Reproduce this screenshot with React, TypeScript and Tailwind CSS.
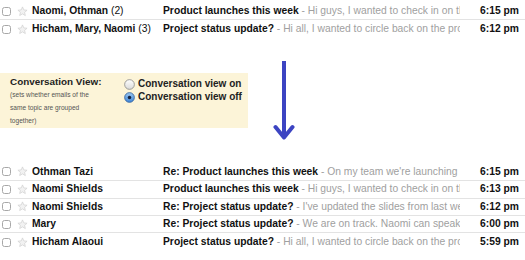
import type { ReactNode } from 'react';

type Mail = {
  from: ReactNode;
  subject: string;
  snippet: string;
  time: string;
};

const before: Mail[] = [
  {
    from: (
      <>
        Naomi, Othman <span className="font-normal">(2)</span>
      </>
    ),
    subject: 'Product launches this week',
    snippet: 'Hi guys, I wanted to check in on things',
    time: '6:15 pm',
  },
  {
    from: (
      <>
        Hicham, Mary, Naomi <span className="font-normal">(3)</span>
      </>
    ),
    subject: 'Project status update?',
    snippet: 'Hi all, I wanted to circle back on the project',
    time: '6:12 pm',
  },
];

const after: Mail[] = [
  { from: 'Othman Tazi', subject: 'Re: Product launches this week', snippet: "On my team we're launching a new", time: '6:15 pm' },
  { from: 'Naomi Shields', subject: 'Product launches this week', snippet: 'Hi guys, I wanted to check in on things', time: '6:13 pm' },
  { from: 'Naomi Shields', subject: 'Re: Project status update?', snippet: "I've updated the slides from last week", time: '6:12 pm' },
  { from: 'Mary', subject: 'Re: Project status update?', snippet: 'We are on track. Naomi can speak to it', time: '6:00 pm' },
  { from: 'Hicham Alaoui', subject: 'Project status update?', snippet: 'Hi all, I wanted to circle back on the project', time: '5:59 pm' },
];

function Checkbox() {
  return <span className="block w-[9px] h-[9px] rounded-[2.5px] border border-[#a8a8a8] bg-white" />;
}

function Star() {
  return (
    <svg width="11" height="11" viewBox="0 0 24 24" className="block">
      <path
        d="M12 2l2.9 6.6 7.1.6-5.4 4.7 1.6 7-6.2-3.7-6.2 3.7 1.6-7L2 9.2l7.1-.6z"
        fill="#f2f2f2"
        stroke="#d2d2d2"
        strokeWidth="1.6"
        strokeLinejoin="round"
      />
    </svg>
  );
}

function Row({ mail, last }: { mail: Mail; last?: boolean }) {
  return (
    <div
      className={`flex items-center h-[17.4px] text-[10.3px] leading-none text-[#111] ${
        last ? '' : 'border-b border-[#e3e3e3]'
      }`}
    >
      <div className="w-[17px] pl-[2px] flex items-center">
        <Checkbox />
      </div>
      <div className="w-[15px] flex items-center">
        <Star />
      </div>
      <div className="w-[131px] font-bold whitespace-nowrap overflow-hidden">{mail.from}</div>
      <div className="w-[297px] whitespace-nowrap overflow-hidden">
        <span className="font-bold">{mail.subject}</span>
        <span className="text-[#a0a0a0]"> - {mail.snippet}</span>
      </div>
      <div className="flex-1 text-right pr-[6px] font-bold">{mail.time}</div>
    </div>
  );
}

function Radio({ checked }: { checked?: boolean }) {
  return (
    <svg width="11" height="11" viewBox="0 0 12 12" className="block">
      <defs>
        <linearGradient id={checked ? 'rOn' : 'rOff'} x1="0" y1="0" x2="0" y2="1">
          <stop offset="0" stopColor={checked ? '#9cc8f2' : '#ffffff'} />
          <stop offset="1" stopColor={checked ? '#3d84d6' : '#d9d9d9'} />
        </linearGradient>
      </defs>
      <circle cx="6" cy="6" r="5.3" fill={`url(#${checked ? 'rOn' : 'rOff'})`} stroke={checked ? '#2f5f9c' : '#8a8a8a'} strokeWidth="0.9" />
      {checked && <circle cx="6" cy="6" r="1.9" fill="#14213d" />}
    </svg>
  );
}

export default function App() {
  return (
    <div className="w-[525px] h-[260px] bg-white overflow-hidden font-['Liberation_Sans',Arial,sans-serif]">
      <div className="pt-[3px]">
        {before.map((m, i) => (
          <Row key={i} mail={m} last={i === before.length - 1} />
        ))}
      </div>

      <div className="h-[126px] flex items-center">
        <div className="w-[248px] h-[55px] bg-[#fcf4d8] flex pl-[10px] pt-[3px]">
          <div className="w-[114px]">
            <div className="text-[9.9px] font-bold leading-[12px] text-[#222]">Conversation View:</div>
            <div className="text-[6.6px] leading-[13px] text-[#555] w-[90px]">
              (sets whether emails of the same topic are grouped together)
            </div>
          </div>
          <div className="flex flex-col gap-[1px] pt-[2px]">
            <label className="flex items-center gap-[3px] text-[10px] font-bold leading-[12px] text-[#222]">
              <Radio />
              Conversation view on
            </label>
            <label className="flex items-center gap-[3px] text-[10px] font-bold leading-[12px] text-[#222]">
              <Radio checked />
              Conversation view off
            </label>
          </div>
        </div>
        <div className="ml-[25px]">
          <svg width="22" height="80" viewBox="0 0 22 80" className="block">
            <path d="M11 0V77" stroke="#3c44c2" strokeWidth="4" />
            <path d="M2.5 66L11 76.5L19.5 66" fill="none" stroke="#3c44c2" strokeWidth="4" strokeLinecap="round" strokeLinejoin="round" />
          </svg>
        </div>
      </div>

      <div>
        {after.map((m, i) => (
          <Row key={i} mail={m} last={i === after.length - 1} />
        ))}
      </div>
    </div>
  );
}
